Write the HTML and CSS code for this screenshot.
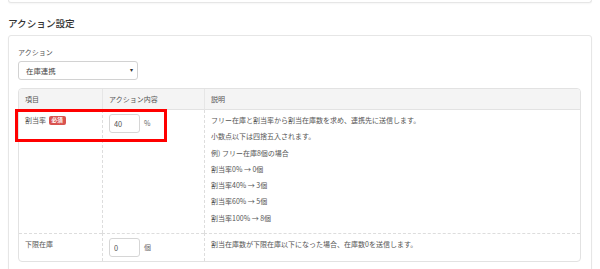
FILE: index.html
```html
<!DOCTYPE html>
<html lang="ja">
<head>
  <meta charset="UTF-8" />
  <title>アクション設定</title>
  <link rel="stylesheet" href="styles.css">
</head>
<body>
  <div class="card card-top"></div>

  <h2 class="section-title">アクション設定</h2>

  <div class="card">
    <label class="field-label" for="action">アクション</label>
    <div class="select" id="action">
      <span>在庫連携</span>
      <span class="caret">▾</span>
    </div>

    <div class="table-wrap">
      <table class="action-table">
        <thead>
          <tr>
            <th class="col-item">項目</th>
            <th class="col-value">アクション内容</th>
            <th>説明</th>
          </tr>
        </thead>
        <tbody>
          <tr>
            <td class="col-item">割当率 <span class="badge">必須</span></td>
            <td class="col-value">
              <div class="value-field">
                <input type="text" class="num-input" value="40" />
                <span class="unit">%</span>
              </div>
            </td>
            <td class="desc">
              <p>フリー在庫と割当率から割当在庫数を求め、連携先に送信します。</p>
              <p>小数点以下は四捨五入されます。</p>
              <p>例) フリー在庫8個の場合</p>
              <p>割当率0% → 0個</p>
              <p>割当率40% → 3個</p>
              <p>割当率60% → 5個</p>
              <p>割当率100% → 8個</p>
            </td>
          </tr>
          <tr>
            <td class="col-item">下限在庫</td>
            <td class="col-value">
              <div class="value-field">
                <input type="text" class="num-input" value="0" />
                <span class="unit">個</span>
              </div>
            </td>
            <td class="desc">
              <p>割当在庫数が下限在庫以下になった場合、在庫数0を送信します。</p>
            </td>
          </tr>
        </tbody>
      </table>
      <!-- highlight around the required row -->
      <div class="highlight"></div>
    </div>
  </div>
</body>
</html>
```

FILE: styles.css
```css
body {
  margin: 0;
  background: #fff;
  font-family: "Noto Sans CJK JP", "Noto Sans", sans-serif;
  color: #555;
}
.card {
  margin: 0 8px;
  background: #fff;
  border: 1px solid #e6e6e6;
  border-radius: 3px;
  box-shadow: 0 1px 2px rgba(0,0,0,0.04);
  padding: 11px 10px 30px 8px;
}
.card-top {
  height: 2px;
  padding: 0;
  border-top: none;
  border-radius: 0 0 3px 3px;
}
.section-title {
  margin: 13px 8px 5px;
  font-size: 9.6px;
  line-height: 14px;
  font-weight: 500;
  color: #333;
}
.field-label {
  display: block;
  font-size: 7px;
  line-height: 10px;
  color: #555;
  margin-left: 1px;
  margin-bottom: 4px;
}
.select {
  width: 107px;
  height: 17px;
  border: 1px solid #d2d2d2;
  border-radius: 3px;
  padding: 0 4px 0 7px;
  display: flex;
  align-items: center;
  justify-content: space-between;
  font-size: 7.4px;
  color: #444;
  margin-left: 1px;
}
.caret {
  font-size: 6px;
  color: #333;
  margin-top: -2px;
}
.table-wrap {
  position: relative;
  margin-top: 8px;
  margin-left: 1px;
}
.action-table {
  width: 100%;
  border-collapse: separate;
  border-spacing: 0;
  border: 1px solid #e2e2e2;
  border-radius: 4px;
  font-size: 7px;
  color: #555;
}
.action-table th {
  background: #f4f4f4;
  font-weight: 400;
  text-align: left;
  height: 20px;
  padding: 0 6px;
  border-bottom: 1px solid #e2e2e2;
  border-left: 1px solid #e6e6e6;
}
.action-table th:first-child {
  border-left: none;
  border-top-left-radius: 4px;
}
.action-table th:last-child {
  border-top-right-radius: 4px;
}
.action-table td {
  vertical-align: top;
  padding: 2px 6px 7px;
  line-height: 16.3px;
  border-left: 1px dashed #ddd;
}
.action-table td:first-child {
  border-left: none;
}
.action-table tbody tr + tr td {
  border-top: 1px dashed #ddd;
}
.col-item {
  width: 71px;
}
.col-value {
  width: 89px;
}
.action-table td.col-value {
  padding: 4px 6px 4px;
}
.value-field {
  display: flex;
  align-items: center;
  gap: 4px;
}
.num-input {
  width: 21px;
  height: 17px;
  box-sizing: content-box;
  padding: 0 4px;
  margin: 0;
  border: 1px solid #d6d6d6;
  border-radius: 3px;
  font-family: inherit;
  font-size: 7.4px;
  color: #555;
}
.unit {
  font-size: 7px;
  color: #666;
}
.badge {
  display: inline-block;
  background: #d9534f;
  color: #fff;
  font-size: 5.6px;
  font-weight: 700;
  line-height: 9px;
  padding: 0 3px;
  border-radius: 2px;
  vertical-align: 1px;
  margin-left: 1px;
}
.desc p {
  margin: 0;
}
.highlight {
  position: absolute;
  left: -3px;
  top: 21px;
  width: 146px;
  height: 27px;
  border: 3px solid #f00;
}
```
